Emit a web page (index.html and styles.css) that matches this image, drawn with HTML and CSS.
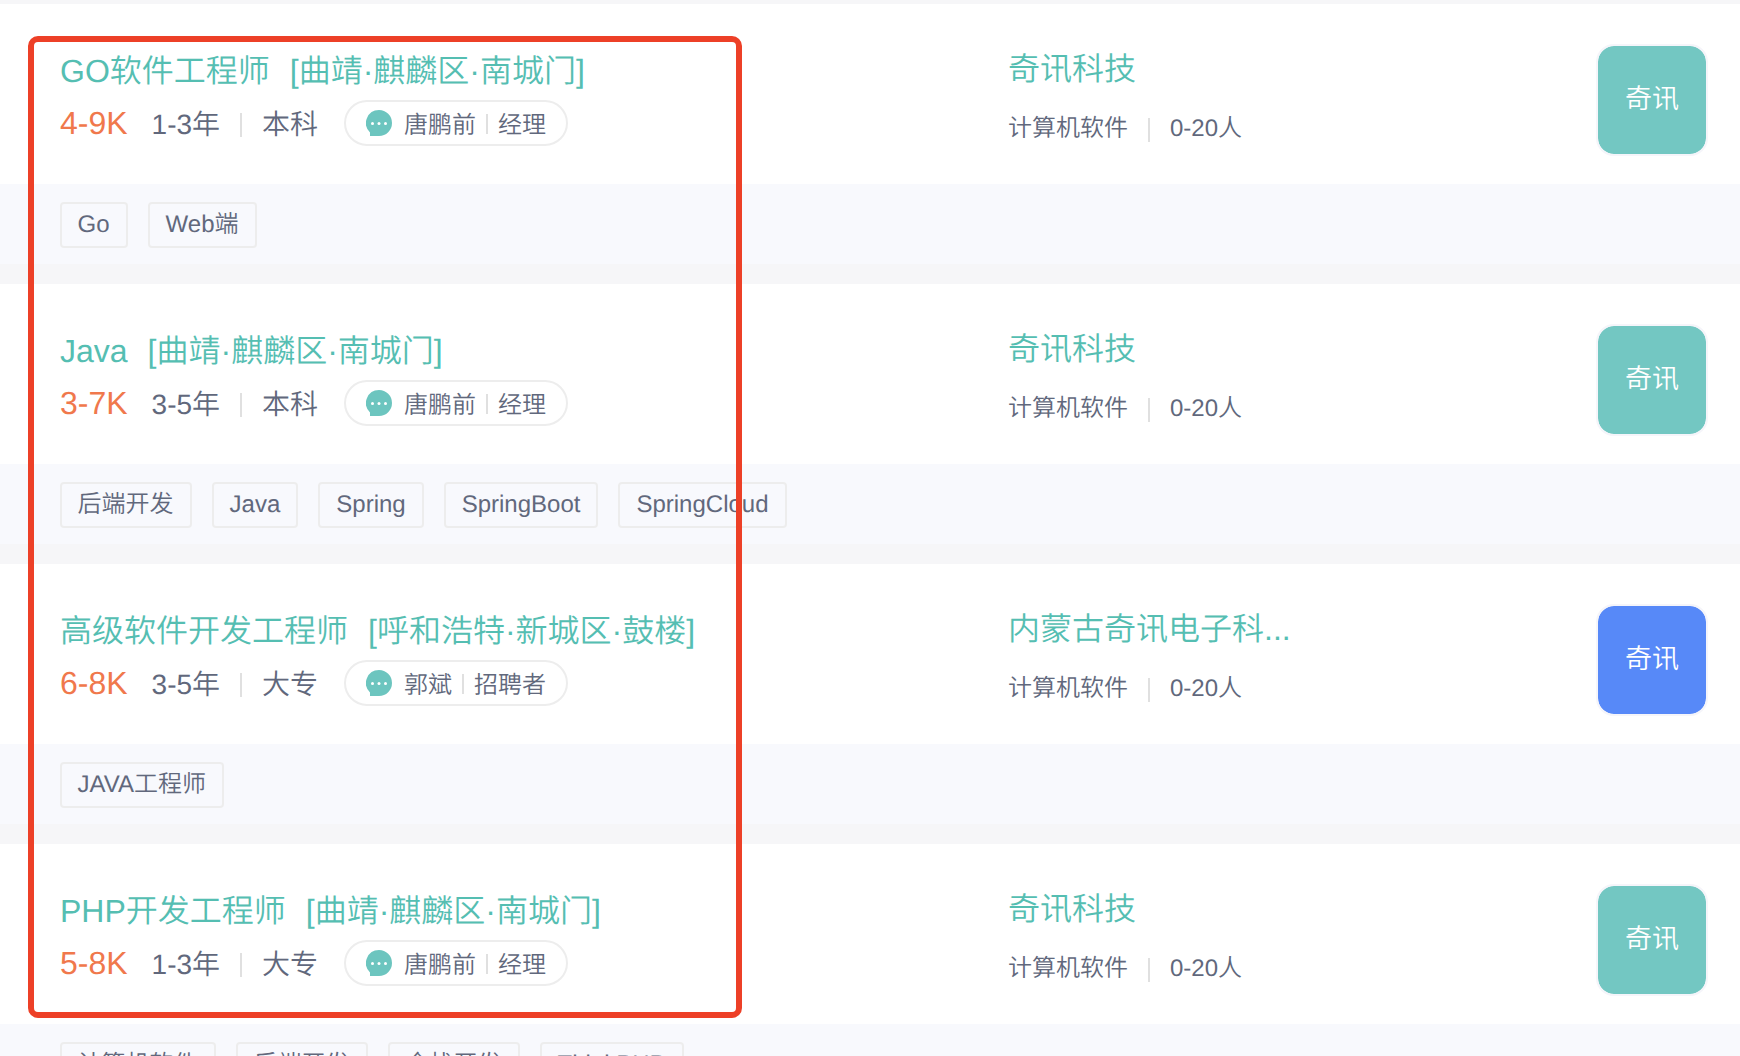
FILE: index.html
```html
<!DOCTYPE html>
<html lang="zh-CN">
<head>
    <meta charset="UTF-8">
    <title>职位列表</title>
    <link rel="stylesheet" href="styles.css">
</head>
<body>
    <svg class="sprite" width="0" height="0">
        <symbol id="icon-chat" viewBox="0 0 26 26">
            <path fill="#6cc5bf" d="M13 0a13 13 0 1 1 0 26H4v-3.600A13 13 0 0 1 13 0z"/>
            <circle cx="6.500" cy="13.500" r="1.500" fill="#fff"/>
            <circle cx="13" cy="13.500" r="1.500" fill="#fff"/>
            <circle cx="19.500" cy="13.500" r="1.500" fill="#fff"/>
        </symbol>
    </svg>

    <ul class="job-list">
        <li class="job-card">
            <div class="job-main">
                <div class="job-info">
                    <div class="job-title"><span>GO软件工程师</span><span>[曲靖·麒麟区·南城门]</span></div>
                    <div class="job-detail">
                        <span class="salary">4-9K</span>
                        <span class="exp">1-3年</span><i class="vline"></i><span class="degree">本科</span>
                        <div class="boss"><svg class="chat"><use href="#icon-chat"/></svg><span>唐鹏前</span><i class="vline"></i><span>经理</span></div>
                    </div>
                </div>
                <div class="company">
                    <div class="company-name">奇讯科技</div>
                    <div class="company-tags">计算机软件<i class="vline"></i>0-20人</div>
                </div>
                <div class="logo">奇讯</div>
            </div>
            <div class="job-tags"><span>Go</span><span>Web端</span></div>
        </li>

        <li class="job-card">
            <div class="job-main">
                <div class="job-info">
                    <div class="job-title"><span>Java</span><span>[曲靖·麒麟区·南城门]</span></div>
                    <div class="job-detail">
                        <span class="salary">3-7K</span>
                        <span class="exp">3-5年</span><i class="vline"></i><span class="degree">本科</span>
                        <div class="boss"><svg class="chat"><use href="#icon-chat"/></svg><span>唐鹏前</span><i class="vline"></i><span>经理</span></div>
                    </div>
                </div>
                <div class="company">
                    <div class="company-name">奇讯科技</div>
                    <div class="company-tags">计算机软件<i class="vline"></i>0-20人</div>
                </div>
                <div class="logo">奇讯</div>
            </div>
            <div class="job-tags"><span>后端开发</span><span>Java</span><span>Spring</span><span>SpringBoot</span><span>SpringCloud</span></div>
        </li>

        <li class="job-card">
            <div class="job-main">
                <div class="job-info">
                    <div class="job-title"><span>高级软件开发工程师</span><span>[呼和浩特·新城区·鼓楼]</span></div>
                    <div class="job-detail">
                        <span class="salary">6-8K</span>
                        <span class="exp">3-5年</span><i class="vline"></i><span class="degree">大专</span>
                        <div class="boss"><svg class="chat"><use href="#icon-chat"/></svg><span>郭斌</span><i class="vline"></i><span>招聘者</span></div>
                    </div>
                </div>
                <div class="company">
                    <div class="company-name">内蒙古奇讯电子科...</div>
                    <div class="company-tags">计算机软件<i class="vline"></i>0-20人</div>
                </div>
                <div class="logo logo-blue">奇讯</div>
            </div>
            <div class="job-tags"><span>JAVA工程师</span></div>
        </li>

        <li class="job-card">
            <div class="job-main">
                <div class="job-info">
                    <div class="job-title"><span>PHP开发工程师</span><span>[曲靖·麒麟区·南城门]</span></div>
                    <div class="job-detail">
                        <span class="salary">5-8K</span>
                        <span class="exp">1-3年</span><i class="vline"></i><span class="degree">大专</span>
                        <div class="boss"><svg class="chat"><use href="#icon-chat"/></svg><span>唐鹏前</span><i class="vline"></i><span>经理</span></div>
                    </div>
                </div>
                <div class="company">
                    <div class="company-name">奇讯科技</div>
                    <div class="company-tags">计算机软件<i class="vline"></i>0-20人</div>
                </div>
                <div class="logo">奇讯</div>
            </div>
            <div class="job-tags"><span>计算机软件</span><span>后端开发</span><span>全栈开发</span><span>ThinkPHP</span></div>
        </li>
    </ul>

    <!-- 标注框 -->
    <div class="mark"></div>
</body>
</html>
```

FILE: styles.css
```css
:root {
    --primary: #55beb2;
    --salary: #f0784c;
    --text: #61687c;
    --gap-bg: #f6f6f8;
}

* {
    box-sizing: border-box;
}

body {
    position: relative;
    margin: 0;
    height: 1056px;
    overflow: hidden;
    background: var(--gap-bg);
    color: var(--text);
    font-family: "Liberation Sans", "Noto Sans CJK SC", sans-serif;
    font-weight: 350;
    text-rendering: geometricPrecision;
}

.sprite {
    position: absolute;
}

.job-list {
    list-style: none;
    margin: 0;
    padding: 4px 0 0;
}

.job-card {
    margin-bottom: 20px;
}

.job-main {
    display: flex;
    height: 180px;
    padding: 40px 32px 0 60px;
    background: #fff;
}

.job-info {
    width: 948px;
}

.job-title {
    display: flex;
    gap: 20px;
    height: 52px;
    line-height: 54px;
    font-size: 32px;
    color: var(--primary);
}

.job-detail {
    display: flex;
    align-items: center;
    height: 54px;
    font-size: 28px;
}

.salary {
    margin-right: 24px;
    font-size: 32px;
    color: var(--salary);
}

.vline {
    flex: none;
    width: 2px;
    height: 24px;
    background: #e0e0e0;
}

.job-detail > .vline {
    margin: 4px 20px 0;
}

.boss {
    display: flex;
    align-items: center;
    height: 46px;
    margin-left: 26px;
    padding: 0 20px;
    border: 2px solid #ededed;
    border-radius: 23px;
    font-size: 24px;
}

.boss span {
    padding-bottom: 1px;
}

.chat {
    width: 26px;
    height: 26px;
    margin-right: 12px;
}

.boss .vline {
    height: 20px;
    margin: 2px 10px 0;
}

.company {
    flex: 1;
}

.company-name {
    height: 50px;
    line-height: 50px;
    font-size: 32px;
    color: var(--primary);
}

.company-tags {
    display: flex;
    align-items: center;
    height: 36px;
    margin-top: 17px;
    line-height: 36px;
    font-size: 24px;
}

.company-tags .vline {
    margin: 2px 20px 0;
}

.logo {
    width: 112px;
    height: 112px;
    border: 2px solid #f5f5fa;
    border-radius: 18px;
    background: #73c7c2;
    background-clip: padding-box;
    color: #fff;
    font-size: 27px;
    line-height: 106px;
    text-align: center;
}

.logo-blue {
    background-color: #5789f8;
}

.job-tags {
    display: flex;
    gap: 20px;
    height: 80px;
    padding: 18px 60px 0 59.600px;
    background: #f8f9fd;
}

.job-tags span {
    height: 46px;
    padding: 0 16px;
    border: 2px solid #ededed;
    border-radius: 4px;
    font-size: 24px;
    line-height: 42px;
}

.mark {
    position: absolute;
    top: 36px;
    left: 28px;
    width: 714px;
    height: 982px;
    border: 6px solid #ed4027;
    border-radius: 10px;
}
```
